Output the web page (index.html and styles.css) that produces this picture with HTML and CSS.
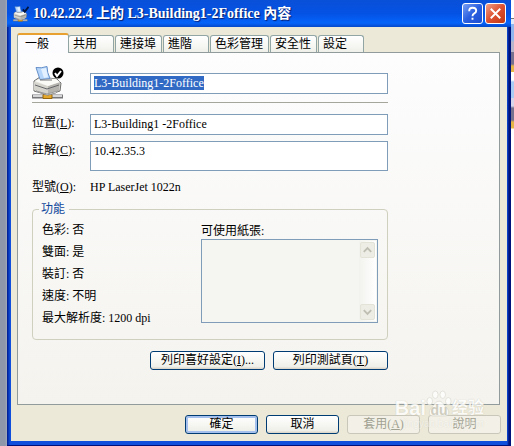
FILE: index.html
```html
<!DOCTYPE html>
<html lang="zh-Hant">
<head>
<meta charset="utf-8">
<title>10.42.22.4 上的 L3-Building1-2Foffice 內容</title>
<link rel="stylesheet" href="styles.css">
</head>
<body>
<svg class="defs" width="0" height="0" aria-hidden="true">
  <symbol id="printer" viewBox="0 0 32 34">
    <path d="M0 30.500h31" stroke="#77777a" stroke-width="4"/>
    <path d="M1 30h29" stroke="#d4d6d8" stroke-width="2"/>
    <path d="M11 28.500h9v4h-9z" fill="#e3a72c" stroke="#94650f"/>
    <path d="M2 15 8 11l17 2 4 4-1 8-12 4L2 25z" fill="#e4e3dd" stroke="#6e6e6c"/>
    <path d="M2 16l14 4v8L2 24z" fill="#d4d3cc"/>
    <path d="M16 20l12-4-1 9-11 3z" fill="#b5b4ae"/>
    <path d="M3 15l6-3 15 1 4 3-12 4z" fill="#fafaf6"/>
    <path d="M3 19l12 4 12-4" fill="none" stroke="#66676a"/>
    <path d="M4 25l11 3 11-3-2 2-9 2z" fill="#fff" stroke="#999"/>
    <path d="M4 1.500q5 1 11-1 0 6 3 12l-10 1q-2-6-4-12z" fill="#b5d6fa" stroke="#668fc8"/>
    <path d="M9 3l5-1 2 9-4 1z" fill="#e2f0ff"/>
    <path d="M8 14h12" stroke="#777"/>
  </symbol>
</svg>
<div class="desktop">
  <main class="dialog">
    <header class="titlebar">
      <svg class="title-icon" viewBox="0 0 34 34" aria-hidden="true"><use href="#printer" width="32" height="34"/><path d="M21 7l4 5 8-10" fill="none" stroke="#001540" stroke-width="4"/></svg>
      <h1>10.42.22.4 上的 L3-Building1-2Foffice 內容</h1>
      <button class="caption" type="button" aria-label="說明"><svg viewBox="0 0 20 20"><path d="M6.500 7.500q0-3.500 3.700-3.500t3.700 3q0 1.700-2 2.800-1.900 1-1.900 3M10 14.500v2" /></svg></button>
      <button class="caption close" type="button" aria-label="關閉"><svg viewBox="0 0 20 20"><path d="M5 5l10 10M15 5 5 15"/></svg></button>
    </header>
    <div class="body">
      <nav class="tabs" role="tablist">
        <button class="tab active" role="tab" aria-selected="true">一般</button>
        <button class="tab" role="tab">共用</button>
        <button class="tab wide" role="tab">連接埠</button>
        <button class="tab" role="tab">進階</button>
        <button class="tab widest" role="tab">色彩管理</button>
        <button class="tab wide" role="tab">安全性</button>
        <button class="tab" role="tab">設定</button>
      </nav>
      <section class="panel">
        <div class="content">
          <div class="name-row">
            <svg class="printer" viewBox="0 0 32 34" aria-hidden="true"><use href="#printer" width="32" height="34"/><circle cx="26" cy="7" r="5.500"/><path d="M23 7l2 3 4-5" fill="none" stroke="#fff" stroke-width="2"/></svg>
            <div class="field name-field" role="textbox" aria-label="名稱" contenteditable="true"><span class="selected">L3-Building1-2Foffice</span></div>
          </div>
          <div class="form">
            <label for="location">位置(<u>L</u>):</label>
            <input class="field" id="location" value="L3-Building1 -2Foffice">
            <label for="comment">註解(<u>C</u>):</label>
            <textarea class="field comment" id="comment">10.42.35.3</textarea>
            <span class="model-label">型號(<u>O</u>):</span>
            <span class="model">HP LaserJet 1022n</span>
          </div>
          <fieldset class="features">
            <legend>功能</legend>
            <ul>
              <li>色彩: 否</li>
              <li>雙面: 是</li>
              <li>裝訂: 否</li>
              <li>速度: 不明</li>
              <li>最大解析度: 1200 dpi</li>
            </ul>
            <div class="paper">
              <span id="paper-label">可使用紙張:</span>
              <div class="list" role="listbox" aria-labelledby="paper-label">
                <div class="scroll">
                  <button type="button" aria-label="向上" disabled><svg viewBox="0 0 14 14"><path d="M3 9l4-4 4 4"/></svg></button>
                  <button type="button" aria-label="向下" disabled><svg viewBox="0 0 14 14"><path d="M3 5l4 4 4-4"/></svg></button>
                </div>
              </div>
            </div>
          </fieldset>
          <div class="actions">
            <button class="btn" type="button">列印喜好設定(<u>I</u>)...</button>
            <button class="btn" type="button">列印測試頁(<u>T</u>)</button>
          </div>
        </div>
      </section>
      <footer class="footer">
        <button class="btn default" type="button">確定</button>
        <button class="btn" type="button">取消</button>
        <button class="btn" type="button" disabled>套用(<u>A</u>)</button>
        <button class="btn" type="button" disabled>說明</button>
      </footer>
    </div>
  </main>
  <div class="behind"></div>
  <div class="watermark">
    <span class="latin">Bai</span>
    <span class="paw"><svg viewBox="0 0 28 30" aria-hidden="true"><g fill="#fff" stroke="#d2d0c4" stroke-width=".7"><ellipse cx="4" cy="12" rx="3" ry="4"/><ellipse cx="10" cy="5" rx="3" ry="4"/><ellipse cx="18" cy="5" rx="3" ry="4"/><ellipse cx="24" cy="12" rx="3" ry="4"/><path d="M14 12c-4 0-5 4-8 7-4 4-3 9 2 9 3 0 9 0 12 0 5 0 6-5 2-9-3-3-4-7-8-7z"/></g></svg><span class="du">du</span></span>
    <span class="hanzi">经验</span>
    <span class="site">jingyan.baidu.com</span>
  </div>
</div>
</body>
</html>
```
FILE: styles.css
```css
* { box-sizing: border-box; }
body {
  margin: 0;
  font: 12px/16px "Liberation Serif", "Noto Sans CJK TC", serif;
  color: #000;
}
button, input, textarea { font: inherit; color: inherit; }
.defs { position: absolute; }
.desktop {
  position: relative;
  display: grid;
  grid-template-columns: minmax(0, 1fr) 3px;
  min-height: 100vh;
  padding-left: 7px;
  background: linear-gradient(90deg, #8e98aa 5px, #a4aaba 7px);
}
.behind {
  background: linear-gradient(#fff 0 18px, #777 18px 19px, #e4ecfa 19px 24px, #8fb6ee 24px 40px, #b8b4cc 42px 52px, #77718f 52px 64px, #e6b548 66px 72px, #fff 72px 80px, #a8ccf4 82px 98px, #d8d4ea 98px 106px, #77718f 108px 120px, #e6b548 122px 128px, #fff 129px);
}
.dialog {
  display: flex;
  flex-direction: column;
  padding: 0 4px 4px;
  background: linear-gradient(90deg, #001a8c, #0f4fdc 3px, #0f4fdc calc(100% - 4px), #00137c calc(100% - 2px));
  border-bottom: 1px solid #00107a;
}
.titlebar {
  display: flex;
  align-items: center;
  gap: 2px;
  height: 27px;
  margin: 0 -4px;
  padding: 0 5px 0 6px;
  background: linear-gradient(#0a50d8, #0452e4 50%, #0664fa 85%, #0448c8);
}
.title-icon { width: 16px; height: 16px; }
h1 {
  flex: 1;
  margin: 0 0 0 2px;
  color: #fff;
  font-size: 14px;
  line-height: 20px;
  white-space: nowrap;
  text-shadow: 1px 1px 1px #0a2070;
}
.caption {
  width: 21px;
  height: 21px;
  padding: 0;
  border: 1px solid #fff;
  border-radius: 3px;
  background: linear-gradient(135deg, #7aa0f4, #2a5fe0 50%, #1c4ed0);
}
.close { background: linear-gradient(135deg, #f0a088, #dd5030 50%, #c03814); }
.caption svg { display: block; width: 19px; height: 19px; }
.caption path { fill: none; stroke: #fff; stroke-width: 2; }
.body {
  flex: 1;
  display: flex;
  flex-direction: column;
  padding: 6px 7px 0 6px;
  background: #ece9d8;
}
.tabs {
  display: flex;
  align-items: flex-end;
  gap: 1px;
  height: 19px;
}
.tab {
  width: 46px;
  height: 17px;
  padding: 0 0 0 4px;
  border: 1px solid #91a5a5;
  border-bottom: 0;
  border-radius: 3px 3px 0 0;
  background: linear-gradient(#fff, #f0f0ea);
  text-align: left;
  line-height: 16px;
  white-space: nowrap;
}
.wide { width: 47px; }
.widest { width: 59px; }
.active {
  position: relative;
  width: 52px;
  height: 20px;
  margin: 0 -2px -1px 0;
  padding-left: 7px;
  border-top: 2px solid #e8a030;
  background: #fcfcfe;
}
.panel {
  flex: 1;
  padding: 11px 15px 12px 14px;
  border: 1px solid #919b9c;
  background: linear-gradient(#fdfdfe, #f4f3ee);
}
.content { max-width: 356px; }
.name-row {
  display: flex;
  align-items: center;
  gap: 26px;
  height: 39px;
  border-bottom: 1px solid #a5a59c;
}
.printer { width: 32px; height: 34px; }
.field {
  width: 100%;
  height: 21px;
  margin: 0;
  padding: 1px 3px;
  border: 1px solid #7f9db9;
  border-radius: 0;
  background: #fff;
  font-size: 12px;
  line-height: 16px;
  outline: 0;
}
.name-field { flex: 1; }
.selected { background: #316ac5; color: #fff; }
.form {
  display: grid;
  grid-template-columns: 58px 1fr;
  row-gap: 6px;
  margin-top: 11px;
}
.form label { padding-top: 1px; }
.comment { display: block; height: 30px; resize: none; overflow: hidden; }
.model-label, .model { padding-top: 2px; }
.features {
  display: grid;
  grid-template-columns: 159px 177px;
  margin: 6px 0 0;
  padding: 2px 8px 10px 9px;
  border: 1px solid #d0d0bf;
  border-radius: 4px;
}
legend { padding: 0 4px 0 2px; margin-left: -3px; color: #11489c; }
ul { margin: 0; padding: 0; list-style: none; line-height: 22px; }
.paper { display: flex; flex-direction: column; padding-top: 4px; }
.list {
  display: flex;
  justify-content: flex-end;
  height: 84px;
  padding: 1px;
  border: 1px solid #7f9db9;
  background: #f5f5f2;
}
.scroll {
  display: flex;
  flex-direction: column;
  justify-content: space-between;
  width: 17px;
  padding: 1px;
  background: linear-gradient(90deg, #f2f2ee, #fff);
}
.scroll button {
  width: 15px;
  height: 16px;
  padding: 0;
  border: 1px solid #e4e3d8;
  border-radius: 2px;
  background: #eeede5;
}
.scroll svg { display: block; width: 13px; height: 14px; }
.scroll path { fill: none; stroke: #bfbeb2; stroke-width: 2; }
.actions { display: flex; justify-content: flex-end; gap: 8px; margin-top: 11px; }
.btn {
  width: 73px;
  height: 19px;
  padding: 0;
  border: 1px solid #003c74;
  border-radius: 3px;
  background: linear-gradient(#fff, #f0f0ea 85%, #d8d2c6);
  line-height: 17px;
  white-space: nowrap;
}
.actions .btn { width: 115px; }
.default { box-shadow: inset 0 0 0 2px #a6c0ee; }
.btn:disabled { border-color: #c9c7ba; background: #f3f1e7; color: #a1a192; }
.footer { display: flex; justify-content: flex-end; gap: 8px; padding: 10px 0 7px; margin-right: -1px; }
.watermark {
  position: absolute;
  right: 30px;
  bottom: 28px;
  display: grid;
  grid-template-columns: auto auto auto;
  align-items: end;
  color: #fff;
  opacity: .8;
  pointer-events: none;
  font-family: "Liberation Sans", "Noto Sans CJK SC", sans-serif;
  text-shadow: 0 0 1px #b9b7a8;
}
.latin { font-size: 20px; line-height: 20px; font-weight: bold; }
.paw { display: grid; width: 26px; }
.paw svg, .du { grid-area: 1 / 1; }
.paw svg { width: 26px; height: 28px; }
.du { align-self: end; color: #c9c7ba; font-size: 14px; text-align: center; font-weight: bold; text-shadow: none; }
.hanzi { font-size: 16px; line-height: 20px; font-weight: bold; }
.site { position: absolute; top: 100%; right: 0; font-size: 10px; line-height: 12px; opacity: .5; }
```
